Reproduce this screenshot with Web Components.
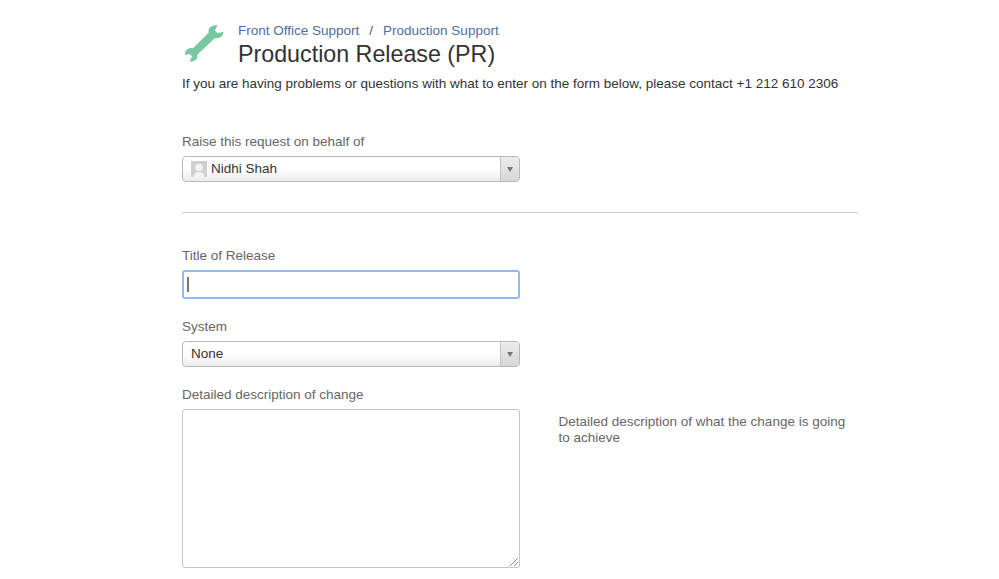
<!DOCTYPE html>
<html>
<head>
<meta charset="utf-8">
<title>Production Release (PR)</title>
<style>
html, body { margin: 0; background: #fff; }
body { font: 13.5px/16px "Liberation Sans", Arial, sans-serif; color: #333; overflow: hidden; height: 579px; }
</style>
</head>
<body>
<request-page>
  <request-header slot="header" crumbs="Front Office Support|Production Support" heading="Production Release (PR)">
    If you are having problems or questions with what to enter on the form below, please contact +1 212 610 2306
  </request-header>
  <form-field label="Raise this request on behalf of" top="41">
    <select-box value="Nidhi Shah" avatar></select-box>
  </form-field>
  <hr-line></hr-line>
  <form-field label="Title of Release" top="34">
    <text-box></text-box>
  </form-field>
  <form-field label="System" top="19">
    <select-box value="None"></select-box>
  </form-field>
  <form-field label="Detailed description of change" top="19" hint="Detailed description of what the change is going to achieve">
    <text-area></text-area>
  </form-field>
</request-page>

<script>
class RequestPage extends HTMLElement {
    constructor() {
        super();
        this.attachShadow({mode:'open'});
        this.shadowRoot.innerHTML = `
<style>
:host { display: block; width: 676px; margin-left: 182px; padding-top: 22px; }
</style>
<slot name="header"></slot>
<slot></slot>`;
    }
}

class RequestHeader extends HTMLElement {
    constructor() {
        super();
        this.attachShadow({mode:'open'});
        const crumbs = this.getAttribute('crumbs').split('|');
        this.shadowRoot.innerHTML = `
<style>
:host { display: block; }
.top { display: flex; align-items: flex-start; }
svg { width: 40px; height: 40px; margin: 2px 14px 0 2px; flex: none; }
.crumbs { display: flex; gap: 10px; line-height: 17px; color: #4d6f9f; }
.crumbs i { font-style: normal; color: #555; }
h1 { margin: 1px 0 0; font-size: 23.25px; font-weight: 400; line-height: 28px; color: #333; }
p { margin: 8px 0 0; line-height: 16px; color: #333; }
</style>
<div class="top">
  <svg viewBox="0 0 40 40" fill="#77c7a0">
    <path d="M33.5 1 L31 6.5 Q32.5 9 35 9 L39.3 7.5 Q39.5 11.5 36.5 13.2 Q33.5 14.8 30.8 14.2 L13.5 30.5 Q14 34 11.5 36 Q9 38 5.5 37.5 L8 32.5 Q7 30 4.5 30.2 L1 31 Q.5 27 3 25.5 Q6 23.5 9 24.3 L24.6 8.7 Q24 5 26.5 3 Q29.5 .8 33.5 1 Z"/>
  </svg>
  <div>
    <div class="crumbs"><span>${crumbs[0]}</span><i>/</i><span>${crumbs[1]}</span></div>
    <h1>${this.getAttribute('heading')}</h1>
  </div>
</div>
<p><slot></slot></p>`;
    }
}

class FormField extends HTMLElement {
    constructor() {
        super();
        this.attachShadow({mode:'open'});
        const hint = this.getAttribute('hint');
        this.shadowRoot.innerHTML = `
<style>
:host { display: block; margin-top: ${this.getAttribute('top')}px; }
label { display: block; color: #666; line-height: 16px; padding-top: 1px; margin-bottom: 6px; }
.row { display: flex; align-items: flex-start; }
::slotted(*) { flex: none; }
.hint { width: 299px; margin: 5px 0 0 38.5px; color: #666; line-height: 16px; }
</style>
<label>${this.getAttribute('label')}</label>
<div class="row">
  <slot></slot>
  ${hint ? `<div class="hint">${hint}</div>` : ''}
</div>`;
    }
}

class SelectBox extends HTMLElement {
    constructor() {
        super();
        this.attachShadow({mode:'open'});
        const avatar = this.hasAttribute('avatar') ? `
  <svg viewBox="0 0 16 16">
    <rect width="16" height="16" fill="#cfcfcf"/>
    <circle cx="8" cy="6.5" r="3.8" fill="#f2f2f2"/>
    <path d="M2.5 16c0-3.6 2.5-5 5.5-5s5.5 1.4 5.5 5z" fill="#f2f2f2"/>
  </svg>` : '';
        this.shadowRoot.innerHTML = `
<style>
:host { display: flex; box-sizing: border-box; width: 338px; height: 26px; border: 1px solid #b8b8b8; border-radius: 4px;
  background: linear-gradient(#fff 50%, #ebebeb); color: #333; overflow: hidden; }
.value { flex: 1; display: flex; align-items: center; gap: 4px; padding-left: 8px; line-height: 24px; }
svg { width: 16px; height: 16px; flex: none; }
.arrow { width: 18px; flex: none; display: flex; align-items: center; justify-content: center;
  border-left: 1px solid #c2c2c2; background: linear-gradient(#ececec, #d6d6d6); }
.arrow b { width: 0; height: 0; border: 3.5px solid transparent; border-top: 5px solid #777; border-bottom: 0; }
</style>
<div class="value">${avatar}<span>${this.getAttribute('value')}</span></div>
<div class="arrow"><b></b></div>`;
    }
}

class TextBox extends HTMLElement {
    constructor() {
        super();
        this.attachShadow({mode:'open'});
        this.shadowRoot.innerHTML = `
<style>
:host { display: block; box-sizing: border-box; width: 338px; height: 29px; border: 2px solid #92b9f0; border-radius: 3px; background: #fff; padding: 5px 0 0 3px; }
i { display: block; width: 2px; height: 15px; background: #777; }
</style>
<i></i>`;
    }
}

class TextArea extends HTMLElement {
    constructor() {
        super();
        this.attachShadow({mode:'open'});
        this.shadowRoot.innerHTML = `
<style>
:host { display: block; box-sizing: border-box; width: 338px; height: 159px; border: 1px solid #c4c4c4; border-radius: 3px; background: #fff; position: relative; }
svg { position: absolute; right: 0; bottom: 0; width: 10px; height: 10px; }
</style>
<svg viewBox="0 0 10 10" stroke="#8a8a8a" stroke-width="1" fill="none"><path d="M1 9 L9 1 M5 9 L9 5"/></svg>`;
    }
}

class HrLine extends HTMLElement {
    constructor() {
        super();
        this.attachShadow({mode:'open'});
        this.shadowRoot.innerHTML = `
<style>
:host { display: block; height: 1px; background: #ccc; margin-top: 30px; }
</style>`;
    }
}

customElements.define('request-page', RequestPage);
customElements.define('request-header', RequestHeader);
customElements.define('form-field', FormField);
customElements.define('select-box', SelectBox);
customElements.define('text-box', TextBox);
customElements.define('text-area', TextArea);
customElements.define('hr-line', HrLine);
</script>
</body>
</html>
